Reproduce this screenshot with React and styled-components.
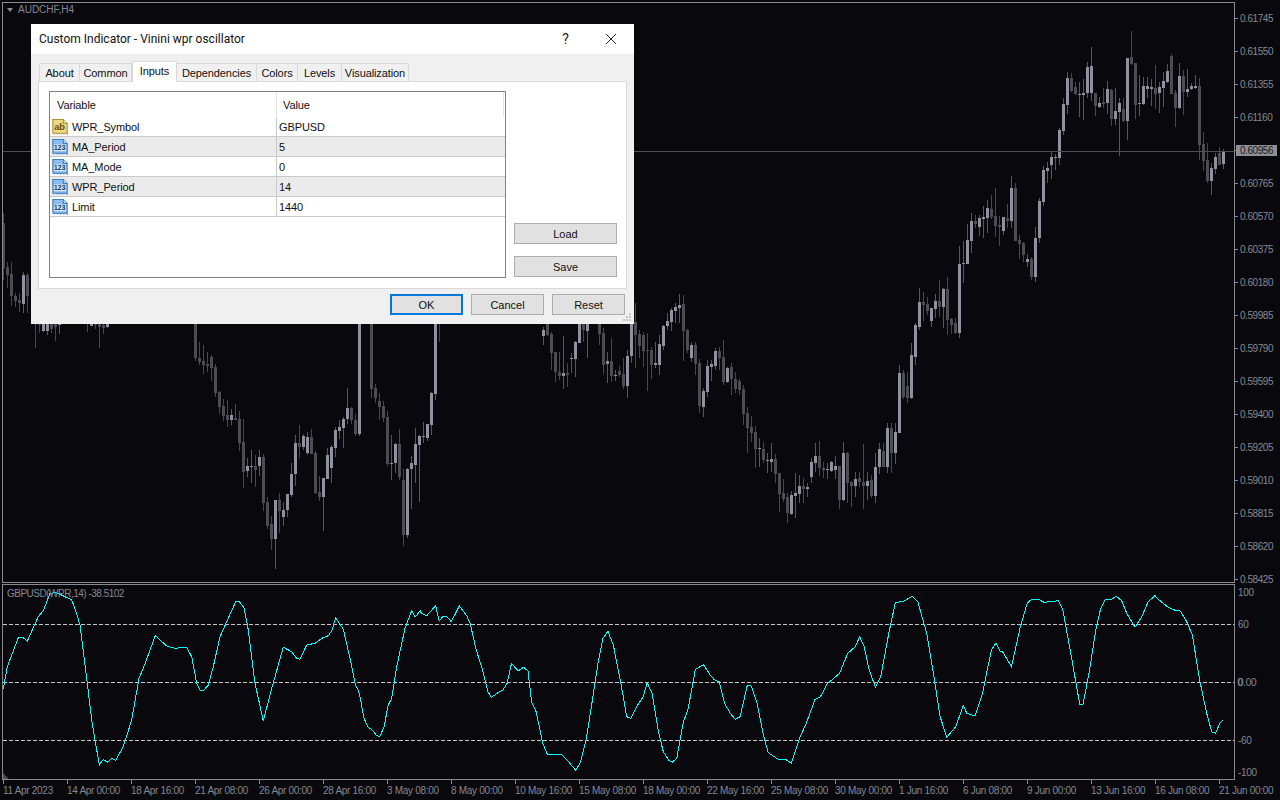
import React from 'react';
import styled, { createGlobalStyle } from 'styled-components';

const BG = '#08080d';
const AXIS_TEXT = '#848994';
const FRAME = '#8a8a8e';
const TITLE_FONT = 'Roboto, "Liberation Sans", sans-serif';
const UI_FONT = '"Liberation Sans", Arial, sans-serif';
const CHART_FONT = '"Liberation Sans", Arial, sans-serif';

// candles read off the chart: [light, bodyTop, bodyBottom, wickTop, wickBottom] in 3x crop pixels
const CANDLES = [
  { ox: 0, oy: 200, start: 10, rows: [
    [0,70,205,40,240],[0,202,225,185,265],[0,222,288,185,318],[0,288,303,280,322],[0,300,310,280,335],[1,225,312,215,338],[0,224,288,218,340],
    null,[0,340,372,340,445],[0,340,375,340,398],[1,340,392,340,395],[1,340,392,340,405],[0,340,388,340,398],[0,340,382,340,423],[1,340,376,340,403],
    null,null,null,null,null,null,[0,340,372,340,395],[1,340,377,340,377],[0,340,376,340,388],[0,340,380,340,443],[0,375,383,340,402],[1,340,380,340,383],
  ] },
  { ox: 180, oy: 320, start: 46, rows: [
    [0,0,115,0,122],[0,115,125,66,135],[0,123,135,75,163],[0,133,137,95,155],[0,110,143,105,182],[0,140,218,133,230],[0,216,260,213,282],[0,258,288,238,302],
    [0,285,300,240,320],[1,285,300,268,315],[0,294,300,252,300],[0,297,368,273,392],[0,366,455,297,505],[1,438,452,415,470],[1,438,440,390,490],[0,438,450,405,500],
    [1,411,438,390,467],[0,411,548,403,572],[0,546,617,530,627],[0,613,656,588,690],[1,540,656,540,746],[0,540,572,518,640],[1,570,590,545,617],[1,522,570,522,592],
    [1,462,525,430,530],[1,369,461,345,497],[0,369,380,315,413],[1,348,381,342,390],[1,351,399,335,405],[0,351,401,327,403],[0,399,519,393,522],[0,516,530,468,543],
    [1,474,530,474,632],[1,405,476,385,477],[1,381,443,375,488],[1,331,383,320,410],[1,321,332,300,357],[1,297,323,292,383],[1,264,296,205,312],[0,264,300,261,312],
    [0,300,342,283,348],[1,0,342,0,348],null,null,[0,0,206,0,233],[0,205,234,193,248],[0,243,261,220,300],[0,258,293,243,306],[0,291,432,274,437],[1,430,431,345,480],
    [1,372,429,368,458],[0,372,471,327,480],[0,480,644,447,677],[1,447,644,444,653],[1,430,446,408,567],[1,372,434,325,488],[1,348,374,345,545],[1,349,350,307,368],
    [1,312,353,312,362],[1,219,314,216,345],[1,0,221,0,240],[0,0,0,0,65],
  ] },
  { ox: 540, oy: 290, start: 10, rows: [
    [1,120,137,110,165],[0,90,135,90,137],[0,133,188,125,240],[0,186,245,185,275],[0,247,258,185,270],[1,250,258,138,296],[0,250,254,220,290],[1,204,206,190,250],
    [1,156,206,152,262],[1,90,158,90,160],[0,90,120,90,155],[1,90,122,90,203],null,null,[0,90,132,90,165],[0,130,224,115,252],[1,213,221,185,278],[0,213,257,145,275],
    [1,255,257,240,272],[0,243,255,228,262],[0,252,288,205,298],[1,198,288,180,325],[1,90,198,60,218],[0,95,135,40,235],[0,133,167,120,205],[0,135,182,125,230],
    [0,180,181,130,302],[0,180,225,170,268],[1,220,225,155,235],[1,162,225,135,255],[1,108,167,105,180],[1,93,108,70,120],[1,60,96,55,122],[1,52,62,40,100],
    [1,45,53,12,100],[0,42,122,15,212],[0,120,180,118,190],[1,165,205,155,215],[0,165,222,155,255],[0,220,348,208,368],[1,303,350,295,380],[1,228,306,210,320],
    [1,222,230,210,272],[1,183,228,175,240],[0,183,205,170,240],[0,201,275,150,285],[1,234,275,230,280],[0,232,266,220,314],[0,267,297,245,308],[0,273,300,268,315],
    [0,298,372,285,405],[0,370,413,350,490],[0,411,428,378,455],[0,427,476,408,535],[1,475,476,445,530],[0,477,510,455,520],[1,511,512,490,550],[1,507,515,458,545],
    [0,507,551,493,580],[0,549,611,549,665],[0,610,627,568,635],[0,620,668,610,698],[1,615,671,603,675],[1,610,617,548,685],[1,588,611,555,640],[0,588,597,565,640],
    [1,591,596,580,622],[1,516,561,505,578],[1,498,519,460,545],[0,498,534,453,558],[0,534,540,517,565],[1,538,539,518,568],[1,516,542,512,545],[1,528,540,498,568],
    [0,528,630,528,657],[1,489,630,455,632],[0,490,579,485,640],[0,575,587,573,650],[1,567,587,545,620],[0,564,576,545,590],[0,576,587,462,656],[1,573,587,545,630],
    [0,570,618,555,625],[1,531,618,490,638],[1,477,532,460,552],[0,483,531,458,532],[1,414,531,400,550],[0,414,489,398,548],[1,426,489,400,522],[1,248,429,225,430],
    [0,250,322,240,326],[0,288,325,245,338],[1,195,325,160,328],[1,105,201,100,225],
  ] },
  { ox: 910, oy: 30, start: 28, rows: [
    [1,817,890,775,900],[0,817,825,787,872],[0,823,843,800,855],[1,835,873,835,890],[1,813,837,793,865],[0,813,831,750,862],[1,777,831,773,895],[0,777,870,742,915],
    [0,868,885,865,912],[0,880,909,865,912],[1,702,909,648,923],[1,700,701,632,758],[1,630,702,583,702],[1,574,632,550,668],[0,574,582,555,595],[1,564,590,555,618],
    [1,561,566,527,623],[1,534,563,510,608],[0,537,561,495,568],[0,558,587,475,622],[0,585,590,558,648],[1,562,602,560,615],[0,565,572,522,595],[1,474,572,438,595],
    [0,474,632,460,634],[0,630,641,615,686],[0,640,674,635,695],[1,687,695,673,710],[0,687,740,680,750],[1,625,740,590,755],[1,514,624,503,638],[1,420,515,408,528],
    [1,415,422,395,458],[1,381,405,365,446],[1,381,383,372,420],[1,300,383,295,405],[1,222,302,205,315],[1,145,224,127,252],[0,144,183,130,186],[0,171,191,155,195],
    [1,192,193,155,262],[1,189,194,148,270],[1,110,189,95,205],[1,108,188,52,213],[0,188,228,188,258],[1,220,231,202,235],[0,216,221,175,235],[1,177,219,152,253],
    [0,180,266,178,288],[1,243,266,175,285],[1,220,245,205,377],[0,237,274,205,277],[1,84,272,84,330],[0,82,102,3,105],[0,99,224,99,267],[1,219,221,135,258],
    [1,168,222,140,225],[1,168,176,142,205],[1,171,176,148,228],[0,174,191,105,238],[1,171,189,155,248],[1,153,174,125,230],[1,123,155,102,160],[0,78,191,72,192],
    [0,189,234,180,291],[1,138,234,98,238],[0,138,185,120,255],[1,178,185,118,200],[1,168,177,158,180],[1,168,174,135,178],[0,168,344,145,390],[0,343,392,307,423],
    [0,390,453,340,458],[1,414,453,400,494],[1,381,417,368,433],[0,369,404,351,406],[1,363,401,357,416],
  ] },
];

const WPR_LEFT = [10,357,22,290,55,203,70,203,82,213,115,140,130,122,150,70,170,68,205,85,215,90,228,125,240,165,262,340,275,450,298,585,310,568,322,577,335,565,347,571,370,530,395,450,417,325,430,295,466,197,500,228,525,235,560,232,575,260,590,340,600,360,610,362,625,345,640,290,660,200,680,155,707,95,718,95,732,113,745,180,765,340,790,453,815,355,850,232,875,245,890,265,900,268,920,225,945,220,965,205,985,197,995,183,1007,143,1030,178,1050,265,1065,340,1078,370,1092,445,1105,473,1115,478,1130,497,1140,499,1152,470,1165,405,1175,385,1190,290,1215,175,1235,122,1245,142,1260,123];
const WPR_MID = [0,67,15,77,35,47,43,93,52,78,60,80,70,95,88,48,105,78,113,103,125,175,140,240,152,305,160,322,175,308,186,300,195,280,205,220,220,243,232,232,242,243,250,335,260,365,275,460,285,492,315,492,330,510,340,527,349,541,360,515,372,450,385,340,398,225,410,145,421,124,433,165,450,280,463,380,472,385,485,350,500,320,509,278,520,310,535,430,545,485,558,512,565,517,575,505,590,395,600,360,617,238,635,224,650,255,660,270,670,275,682,340,695,370,706,388,717,380,733,287,742,288,755,340,770,440,780,488,805,510,820,509,832,520,850,445,865,400,885,328,897,320,912,282,940,250,958,190,975,170,985,140,995,170,1005,235,1020,292,1032,260,1050,130,1065,37,1082,35,1102,19,1115,35,1135,130,1150,250,1165,380,1180,442,1200,410,1217,347,1225,370,1243,378,1260,310,1280,180,1290,160,1300,185,1305,185,1325,230,1345,110,1360,40,1370,28,1385,28,1398,37,1430,32,1440,60,1455,170,1478,344,1485,344,1500,240,1515,110,1525,55];
const WPR_RIGHT = [15,120,35,118,48,108,65,122,80,160,105,202,125,170,145,125,165,107,180,122,205,142,228,152,240,152,260,185,277,225,300,365,320,460,335,515,346,520,360,490,368,480];

const toPoints = (list, ox, oy, scaleX, scaleY) => {
  const out = [];
  for (let i = 0; i < list.length; i += 2) {
    out.push(`${(ox + list[i] / scaleX).toFixed(1)},${(oy + list[i + 1] / scaleY).toFixed(1)}`);
  }
  return out;
};

const WPR_POINTS = [
  ...toPoints(WPR_LEFT, 0, 570, 3, 3),
  ...toPoints(WPR_MID, 420, 590, 2.24, 3),
  ...toPoints(WPR_RIGHT, 1100, 560, 3, 3),
].join(' ');

const PRICES = ['0.61745','0.61550','0.61355','0.61160','0.60956','0.60765','0.60570','0.60375','0.60180','0.59985','0.59790','0.59595','0.59400','0.59205','0.59010','0.58815','0.58620','0.58425'];
const DATES = ['11 Apr 2023','14 Apr 00:00','18 Apr 16:00','21 Apr 08:00','26 Apr 00:00','28 Apr 16:00','3 May 08:00','8 May 00:00','10 May 16:00','15 May 08:00','18 May 00:00','22 May 16:00','25 May 08:00','30 May 00:00','1 Jun 16:00','6 Jun 08:00','9 Jun 00:00','13 Jun 16:00','16 Jun 08:00','21 Jun 00:00'];
const TABS = ['About','Common','Inputs','Dependencies','Colors','Levels','Visualization'];
const TAB_WIDTHS = [41, 52, 45, 80, 41, 44, 67];
const INPUTS = [
  { name: 'WPR_Symbol', value: 'GBPUSD', type: 'ab' },
  { name: 'MA_Period', value: '5', type: '123' },
  { name: 'MA_Mode', value: '0', type: '123' },
  { name: 'WPR_Period', value: '14', type: '123' },
  { name: 'Limit', value: '1440', type: '123' },
];

const GlobalStyle = createGlobalStyle`
  html, body { margin: 0; padding: 0; background: ${BG}; overflow: hidden; }
  * { box-sizing: border-box; }
`;

const Terminal = styled.div`
  position: relative;
  width: 1280px;
  height: 800px;
  background: ${BG};
  display: flex;
  flex-direction: column;
  font-family: ${CHART_FONT};
  font-size: 10px;
  color: ${AXIS_TEXT};
`;

const PricePane = styled.div`
  display: flex;
  height: 583px;
  padding: 2px 0 0 2px;
`;

const IndicatorPane = styled.div`
  display: flex;
  height: 196px;
  margin-top: 1px;
  padding-left: 2px;
`;

const ChartFrame = styled.div`
  position: relative;
  width: 1233px;
  flex: none;
  border: 1px solid ${FRAME};

  svg { display: block; }
`;

const Legend = styled.span`
  position: absolute;
  left: ${(p) => p.$left}px;
  top: ${(p) => p.$top}px;
  letter-spacing: ${(p) => p.$spacing}px;
  line-height: 12px;
  white-space: nowrap;
`;

const CollapseMark = styled.i`
  position: absolute;
  left: 4px;
  top: 5px;
  border: 3.5px solid transparent;
  border-top: 4px solid #8c8c90;
  border-bottom: 0;
`;

const CornerMark = styled.i`
  position: absolute;
  left: 0;
  bottom: 0;
  border-left: 6px solid #4a4a50;
  border-top: 6px solid transparent;
`;

const PriceAxis = styled.div`
  display: flex;
  flex-direction: column;
`;

const PriceRow = styled.div`
  display: flex;
  align-items: center;
  height: 33px;
  flex: none;

  &::before {
    content: '';
    width: 3px;
    height: 1px;
    margin-right: 2px;
    background: ${FRAME};
  }
`;

const PriceLabel = styled.span`
  letter-spacing: -0.45px;
  line-height: 11px;
  ${(p) => p.$current && `
    background: #8f8f96;
    color: #17171b;
    margin-left: -4px;
    padding: 0 4px;
    width: 41px;
  `}
`;

const LevelAxis = styled.div`
  display: flex;
  flex-direction: column;
  padding: 3px 0 0 3px;
`;

const Level = styled.span`
  margin-top: ${(p) => p.$gap}px;
  line-height: 12px;
  height: 12px;
  letter-spacing: -0.3px;
`;

const DoubledZero = styled.span`
  text-shadow: -0.7px 0 0 currentColor;
`;

const TimeAxis = styled.div`
  display: flex;
  padding-left: 3px;
  height: 20px;
`;

const TimeCell = styled.div`
  position: relative;
  flex: none;
  width: 64px;
  padding-top: 5px;
  line-height: 12px;
  letter-spacing: -0.3px;
  white-space: nowrap;

  &::before {
    content: '';
    position: absolute;
    left: 0;
    top: 0;
    width: 1px;
    height: 4px;
    background: ${FRAME};
  }
`;

const Dialog = styled.div`
  position: absolute;
  left: 31px;
  top: 24px;
  width: 603px;
  height: 300px;
  display: flex;
  flex-direction: column;
  background: #f0f0f0;
  color: #111;
  font-family: ${UI_FONT};
  font-size: 11px;
`;

const TitleBar = styled.div`
  display: flex;
  align-items: center;
  height: 30px;
  flex: none;
  padding: 0 1px 1px 8px;
  background: #fff;
  font-family: ${TITLE_FONT};
  font-size: 12px;
`;

const TitleText = styled.span`
  flex: 1;
`;

const TitleButton = styled.button`
  display: flex;
  align-items: center;
  justify-content: center;
  width: 45px;
  height: 29px;
  padding: 0;
  border: none;
  background: none;
  color: #222;
  font: inherit;
  font-size: 14px;
`;

const TabStrip = styled.div`
  display: flex;
  align-items: flex-end;
  height: 27px;
  flex: none;
  padding-left: 8px;
  letter-spacing: -0.1px;
`;

const Tab = styled.div`
  position: relative;
  display: flex;
  align-items: center;
  justify-content: center;
  height: ${(p) => (p.$active ? 21 : 18)}px;
  width: ${(p) => p.$width}px;
  margin-bottom: ${(p) => (p.$active ? -1 : 0)}px;
  padding-bottom: ${(p) => (p.$active ? 2 : 0)}px;
  border: 1px solid #d9d9d9;
  border-left-width: ${(p) => (p.$first || p.$active ? 1 : 0)}px;
  border-bottom: none;
  background: ${(p) => (p.$active ? '#fff' : '#f0f0f0')};
  z-index: ${(p) => (p.$active ? 1 : 0)};
  white-space: nowrap;
`;

const TabPanel = styled.div`
  display: flex;
  height: 208px;
  flex: none;
  margin: 0 7px;
  padding: 9px 0 0 10px;
  background: #fff;
  border: 1px solid #d9d9d9;
`;

const InputsTable = styled.div`
  width: 457px;
  height: 187px;
  flex: none;
  border: 1px solid #7f8388;
  letter-spacing: -0.1px;
`;

const HeaderRow = styled.div`
  display: grid;
  grid-template-columns: 226px 228px;
  height: 25px;
`;

const HeaderCell = styled.div`
  display: flex;
  align-items: center;
  height: 24px;
  padding: 1px 0 0 ${(p) => (p.$second ? 6 : 7)}px;
  border-left: ${(p) => (p.$second ? '1px solid #e4e4e4' : 'none')};
  border-right: ${(p) => (p.$second ? '1px solid #e4e4e4' : 'none')};
`;

const InputRow = styled.div`
  display: grid;
  grid-template-columns: 226px 228px;
  height: 20px;
  background: ${(p) => (p.$shaded ? '#ebebeb' : '#fff')};
  border-bottom: 1px solid #c9c9c9;
`;

const NameCell = styled.div`
  display: flex;
  align-items: center;
  gap: 4px;
  padding-left: 2px;
`;

const ValueCell = styled.div`
  display: flex;
  align-items: center;
  padding-left: 2px;
  border-left: 1px solid #c9c9c9;
`;

const SideButtons = styled.div`
  display: flex;
  flex-direction: column;
  justify-content: flex-end;
  gap: 12px;
  width: 103px;
  height: 187px;
  margin-left: 8px;
  padding-bottom: 1px;
`;

const DialogButton = styled.button`
  width: ${(p) => p.$width || 73}px;
  height: 21px;
  padding: 0;
  background: #e1e1e1;
  border: ${(p) => (p.$primary ? '2px solid #0078d7' : '1px solid #adadad')};
  color: #111;
  font: inherit;
`;

const Footer = styled.div`
  position: relative;
  display: flex;
  justify-content: flex-end;
  gap: 8px;
  flex: 1;
  padding: 5px 9px 0 0;
`;

const Grip = styled.svg`
  position: absolute;
  right: 2px;
  bottom: 2px;
`;

const CandleChart = () => (
  <svg width="1231" height="579" viewBox="3 3 1231 579" shapeRendering="crispEdges">
    {CANDLES.flatMap((seg, s) =>
      seg.rows.map((row, i) => {
        if (!row) return null;
        const [light, top, bottom, wickTop, wickBottom] = row;
        const x = Math.floor(seg.ox + (seg.start + i * 12) / 3);
        const y = (v) => Math.round(seg.oy + v / 3);
        return (
          <g key={`${s}-${i}`}>
            <rect x={x} y={y(wickTop)} width="1" height={Math.max(1, y(wickBottom) - y(wickTop))} fill={light ? '#56565e' : '#47474c'} />
            {bottom > top && (
              <rect x={x - 1} y={y(top)} width="3" height={Math.max(1, y(bottom) - y(top))} fill={light ? '#90909f' : '#4c4c51'} />
            )}
          </g>
        );
      })
    )}
    <rect x="3" y="151" width="1231" height="1" fill="#4e4e54" />
  </svg>
);

const OscillatorChart = () => (
  <svg width="1231" height="194" viewBox="3 585 1231 194">
    {[624.5, 682.5, 740.5].map((y) => (
      <line key={y} x1="3" x2="1234" y1={y} y2={y} stroke="#c8c8c8" strokeWidth="1" strokeDasharray="4 2" shapeRendering="crispEdges" />
    ))}
    <polyline points={WPR_POINTS} fill="none" stroke="#00ffff" strokeWidth="1" shapeRendering="crispEdges" />
  </svg>
);

const TypeIcon = ({ type }) => {
  const yellow = type === 'ab';
  const edge = yellow ? '#a8933a' : '#3f7fbe';
  return (
    <svg width="16" height="16" viewBox="1 1 14 14.5">
      <path
        d="M1.5 1.5H11L14.5 5V14.5L13 13.5L11.5 14.5L10 13.5L8.5 14.5L7 13.5L5.5 14.5L4 13.5L2.5 14.5L1.5 13.5Z"
        fill={yellow ? '#efdc80' : '#8dbdec'}
        stroke={edge}
      />
      <path d="M11 1.5V5H14.5" fill={yellow ? '#fff6c4' : '#dcecfb'} stroke={edge} />
      {!yellow && <rect x="2.5" y="6" width="11" height="6" fill="#dcebf9" />}
      <text
        x="7.6"
        y={yellow ? 11 : 11.4}
        textAnchor="middle"
        fontFamily="Liberation Sans, sans-serif"
        fontWeight="700"
        fontSize={yellow ? 8.5 : 6.6}
        fill={yellow ? '#5d4e0c' : '#0e3a68'}
      >
        {type}
      </text>
    </svg>
  );
};

const App = () => (
  <Terminal>
    <GlobalStyle />
    <PricePane>
      <ChartFrame>
        <CandleChart />
        <CollapseMark />
        <Legend $left={15} $top={1} $spacing={0}>AUDCHF,H4</Legend>
      </ChartFrame>
      <PriceAxis>
        {PRICES.map((price, i) => (
          <PriceRow key={price}>
            <PriceLabel $current={i === 4}>{price}</PriceLabel>
          </PriceRow>
        ))}
      </PriceAxis>
    </PricePane>

    <IndicatorPane>
      <ChartFrame>
        <OscillatorChart />
        <Legend $left={4} $top={3} $spacing={-0.5}>GBPUSD(WPR,14) -38.5102</Legend>
        <CornerMark />
      </ChartFrame>
      <LevelAxis>
        <Level $gap={0}>100</Level>
        <Level $gap={20}>60</Level>
        <Level $gap={46}>
          <DoubledZero>0</DoubledZero>.00
        </Level>
        <Level $gap={46}>-60</Level>
        <Level $gap={20}>-100</Level>
      </LevelAxis>
    </IndicatorPane>

    <TimeAxis>
      {DATES.map((date) => (
        <TimeCell key={date}>{date}</TimeCell>
      ))}
    </TimeAxis>

    <Dialog>
      <TitleBar>
        <TitleText>Custom Indicator - Vinini wpr oscillator</TitleText>
        <TitleButton>?</TitleButton>
        <TitleButton>
          <svg width="12" height="12" viewBox="0 0 12 12">
            <path d="M1 1L11 11M11 1L1 11" stroke="#222" strokeWidth="1" fill="none" />
          </svg>
        </TitleButton>
      </TitleBar>

      <TabStrip>
        {TABS.map((tab, i) => (
          <Tab key={tab} $width={TAB_WIDTHS[i]} $first={i === 0} $active={tab === 'Inputs'}>
            {tab}
          </Tab>
        ))}
      </TabStrip>

      <TabPanel>
        <InputsTable>
          <HeaderRow>
            <HeaderCell>Variable</HeaderCell>
            <HeaderCell $second>Value</HeaderCell>
          </HeaderRow>
          {INPUTS.map((input, i) => (
            <InputRow key={input.name} $shaded={i % 2 === 1}>
              <NameCell>
                <TypeIcon type={input.type} />
                {input.name}
              </NameCell>
              <ValueCell>{input.value}</ValueCell>
            </InputRow>
          ))}
        </InputsTable>
        <SideButtons>
          <DialogButton $width={103}>Load</DialogButton>
          <DialogButton $width={103}>Save</DialogButton>
        </SideButtons>
      </TabPanel>

      <Footer>
        <DialogButton $primary>OK</DialogButton>
        <DialogButton>Cancel</DialogButton>
        <DialogButton>Reset</DialogButton>
        <Grip width="9" height="9" viewBox="0 0 9 9">
          <path d="M6 0h2v2H6zM3 3h2v2H3zM6 3h2v2H6zM0 6h2v2H0zM3 6h2v2H3zM6 6h2v2H6z" fill="#c4c4c4" />
        </Grip>
      </Footer>
    </Dialog>
  </Terminal>
);

export default App;
